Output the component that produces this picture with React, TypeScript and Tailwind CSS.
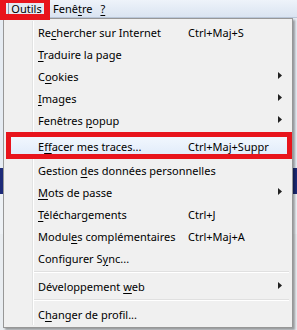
import React from "react";

type Item = {
    label: React.ReactNode;
    shortcut?: string;
    sub?: boolean;
    active?: boolean;
} | "sep";

const u = (c: string) => <span className="underline underline-offset-2">{c}</span>;

const items: Item[] = [
    {label: <>Re{u("c")}hercher sur Internet</>, shortcut: "Ctrl+Maj+S"},
    {label: <>{u("T")}raduire la page</>},
    {label: <>C{u("o")}okies</>, sub: true},
    {label: <>{u("I")}mages</>, sub: true},
    {label: <>Fenêtres {u("p")}opup</>, sub: true},
    "sep",
    {label: <>E{u("f")}facer mes traces...</>, shortcut: "Ctrl+Maj+Suppr", active: true},
    {label: <>Gestion {u("d")}es données personnelles</>},
    {label: <>{u("M")}ots de passe</>, sub: true},
    {label: <>{u("T")}éléchargements</>, shortcut: "Ctrl+J"},
    {label: <>Modul{u("e")}s complémentaires</>, shortcut: "Ctrl+Maj+A"},
    {label: <>Configurer S{u("y")}nc...</>},
    "sep",
    {label: <>Développement {u("w")}eb</>, sub: true},
    "sep",
    {label: <>C{u("h")}anger de profil...</>},
];

function Arrow() {
    return (
        <svg width="4" height="7" viewBox="0 0 4 7" className="absolute left-[274px] top-[7px]">
            <path d="M0 0 L4 3.5 L0 7 Z" fill="#222"/>
        </svg>
    );
}

export default function App() {
    return (
        <div
            className="relative w-[297px] h-[330px] overflow-hidden bg-[#dde5ef] text-[11px] text-black"
            style={{fontFamily: '"Noto Sans", "Open Sans", sans-serif'}}
        >
            {/* menu bar */}
            <div className="flex h-[18px] items-center border-b border-[#b9c6d8] bg-gradient-to-b from-[#eef3fa] to-[#dae4f1]">
                <div className="ml-[8px] flex h-[16px] w-[37px] items-center justify-center rounded-[2px] border border-[#8d9cb0] bg-[#e4eaf2] leading-none">
                    <span>{u("O")}utils</span>
                </div>
                <div className="ml-[8px] leading-none">Fenê{u("t")}re</div>
                <div className="ml-[8px] leading-none">{u("?")}</div>
            </div>

            {/* page behind the menu */}
            <div className="flex flex-col">
                <div className="h-[150px] bg-[#e6ecf3]"/>
                <div className="h-[26px] bg-[#1d2a78]"/>
                <div className="h-[40px] bg-[#eef2f6]"/>
                <div className="h-[100px] bg-[#e9edf1]"/>
            </div>

            {/* dropdown */}
            <div
                className="absolute left-[3px] top-[18px] h-[310px] w-[290px] border border-[#979797] bg-[#f0f0f0] pt-[2px] shadow-[2px_2px_2px_rgba(0,0,0,0.35)]">
                <div className="absolute left-[28px] top-[2px] bottom-[2px] w-[2px] border-l border-[#e2e3e3] bg-white"/>
                <div className="relative flex flex-col">
                    {items.map((it, i) =>
                        it === "sep" ? (
                            <div key={i} className="flex h-[6px] items-center pl-[30px] pr-[3px]">
                                <div className="h-[2px] w-full border-t border-[#e0e0e0] bg-white"/>
                            </div>
                        ) : (
                            <div key={i} className={`relative flex h-[22px] items-center leading-none ${it.active ? "pb-[3px]" : ""}`}>
                                {it.active && (
                                    <div className="absolute left-[3px] right-[3px] top-[-2px] bottom-[3px] rounded-[3px] border border-[#b8d6fb] bg-gradient-to-b from-[#f2f7fe] to-[#e1ecfa]"/>
                                )}
                                <span className="relative ml-[34px] w-[150px] whitespace-nowrap">{it.label}</span>
                                {it.shortcut && <span className="relative whitespace-nowrap">{it.shortcut}</span>}
                                {it.sub && <Arrow/>}
                            </div>
                        )
                    )}
                </div>
            </div>

            {/* red annotation boxes */}
            <div className="absolute left-0 top-[-3px] h-[23px] w-[50px] border-[6px] border-[#e8141c]"/>
            <div className="absolute left-[6px] top-[132px] h-[27px] w-[286px] border-[5px] border-[#e8141c]"/>
        </div>
    );
}
